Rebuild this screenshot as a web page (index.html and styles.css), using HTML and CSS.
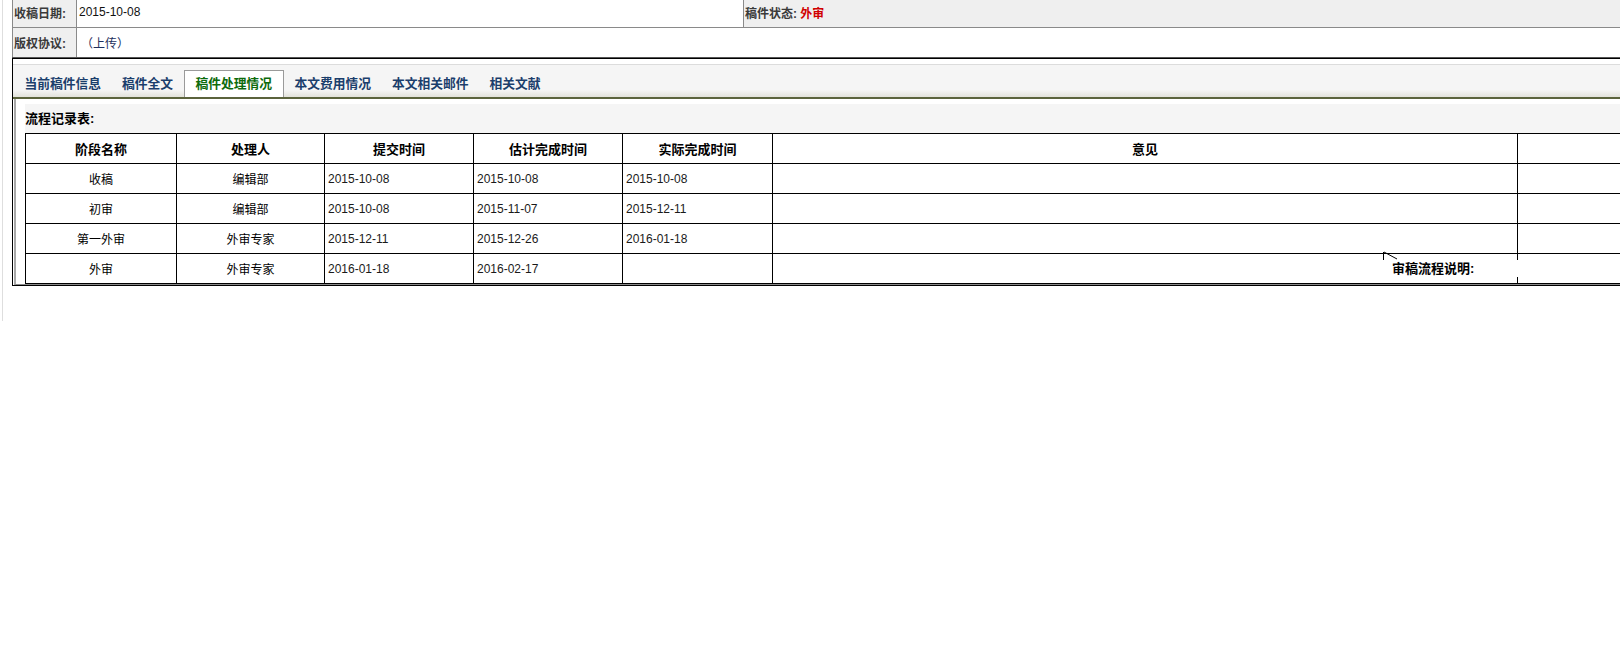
FILE: index.html
```html
<!DOCTYPE html>
<html lang="zh">
<head>
<meta charset="utf-8">
<title>稿件处理情况</title>
<link rel="stylesheet" href="styles.css">
</head>
<body>
<div class="frame">
  <table class="info">
    <colgroup><col class="c-label"><col class="c-value"><col class="c-status"></colgroup>
    <tr class="r1">
      <td class="label">收稿日期:</td>
      <td class="value">2015-10-08</td>
      <td class="status">稿件状态: <span class="red">外审</span></td>
    </tr>
    <tr class="r2">
      <td class="label">版权协议:</td>
      <td class="value link" colspan="2">（上传）</td>
    </tr>
  </table>

  <div class="panel">
    <div class="tabbar">
      <ul class="tabs">
        <li class="tab">当前稿件信息</li>
        <li class="tab">稿件全文</li>
        <li class="tab active">稿件处理情况</li>
        <li class="tab">本文费用情况</li>
        <li class="tab">本文相关邮件</li>
        <li class="tab">相关文献</li>
      </ul>
    </div>
    <div class="tabcontent">
      <div class="record">
        <div class="heading">流程记录表:</div>
        <table class="flow">
          <colgroup>
            <col class="w1"><col class="w2"><col class="w3"><col class="w4"><col class="w5"><col class="w6"><col class="w7">
          </colgroup>
          <tr class="head">
            <th>阶段名称</th><th>处理人</th><th>提交时间</th><th>估计完成时间</th><th>实际完成时间</th><th>意见</th><th></th>
          </tr>
          <tr>
            <td class="c">收稿</td><td class="c">编辑部</td><td>2015-10-08</td><td>2015-10-08</td><td>2015-10-08</td><td></td><td></td>
          </tr>
          <tr>
            <td class="c">初审</td><td class="c">编辑部</td><td>2015-10-08</td><td>2015-11-07</td><td>2015-12-11</td><td></td><td></td>
          </tr>
          <tr>
            <td class="c">第一外审</td><td class="c">外审专家</td><td>2015-12-11</td><td>2015-12-26</td><td>2016-01-18</td><td></td><td></td>
          </tr>
          <tr>
            <td class="c">外审</td><td class="c">外审专家</td><td>2016-01-18</td><td>2016-02-17</td><td></td><td></td><td></td>
          </tr>
        </table>
        <svg class="callout" width="20" height="12" viewBox="0 0 20 12"><path d="M2.5 2 V10 M3 2 L16 9" stroke="#000" stroke-width="1" fill="none"/></svg>
        <div class="tip">审稿流程说明:</div>
      </div>
    </div>
  </div>
</div>
</body>
</html>
```

FILE: styles.css
```css
html, body {
  margin: 0;
  padding: 0;
  background: #fff;
  overflow: hidden;
}
body {
  font-family: "Liberation Sans", "Noto Sans CJK SC", sans-serif;
  font-size: 12px;
  color: #000;
}
.frame {
  width: 1720px;
  margin-left: 2px;
  border-left: 1px solid #dedede;
  padding-left: 9px;
  padding-bottom: 35px;
}

/* top info table */
.info {
  border-collapse: collapse;
  width: 1700px;
  table-layout: fixed;
  margin-top: -4px;
}
.c-label { width: 64px; }
.c-value { width: 667px; }
.info td {
  border: 1px solid #8a8a8a;
  padding: 0 2px;
  white-space: nowrap;
  vertical-align: middle;
}
.info .r1 td { height: 30px; }
.info .r2 td { height: 29px; border-bottom-color: #555; }
.info .label {
  background: #efefef;
  font-weight: bold;
  color: #3a3a3a;
  padding-left: 1px;
}
.info .value { color: #111; }
.info .value.link { color: #1e2f5c; padding-left: 4px; }
.info .status {
  background: #efefef;
  font-weight: bold;
  color: #3a3a3a;
  padding-left: 1px;
}
.red { color: #d00000; }

/* panel */
.panel {
  border-left: 1px solid #000;
  border-top: 1px solid #000;
  border-bottom: 1px solid #000;
}
.tabbar {
  padding-top: 5px;
  background: #fff;
}
.tabs {
  list-style: none;
  margin: 0;
  padding: 5px 0 0 1px;
  display: flex;
  border-top: 1px solid #dcdcdc;
  border-bottom: 2px solid #5b633c;
  background: linear-gradient(to bottom, #f5f5f5 0%, #f5f5f5 78%, #e2e2da 100%);
}
.tab {
  padding: 0 9.5px;
  height: 27px;
  line-height: 25px;
  font-size: 12.75px;
  font-weight: bold;
  color: #1b3e6c;
  border: 1px solid transparent;
  border-bottom: 0;
  box-sizing: border-box;
}
.tab.active {
  background: #fff;
  border-color: #9a9a9a;
  color: #0c6b0c;
  padding: 0 11px;
}
.tabcontent {
  margin-left: 1px;
  border-left: 2px solid #a8a8a8;
  border-bottom: 1px solid #8a8a8a;
  padding: 5px 0 0 9px;
  background: #fff;
}
.record {
  background: #f5f5f5;
  position: relative;
  padding-top: 5px;
}
.heading {
  font-weight: bold;
  font-size: 13px;
  line-height: 20px;
  margin-bottom: 4px;
  color: #000;
}
.flow {
  border-collapse: collapse;
  table-layout: fixed;
  width: 1643px;
  background: #fff;
}
.w1 { width: 151px; }
.w2 { width: 148px; }
.w3 { width: 149px; }
.w4 { width: 149px; }
.w5 { width: 150px; }
.w6 { width: 745px; }
.w7 { width: 151px; }
.flow th, .flow td {
  border: 1px solid #000;
  height: 30px;
  padding: 0 3px;
  box-sizing: border-box;
  white-space: nowrap;
  vertical-align: middle;
  text-align: left;
  color: #1a1a1a;
}
.flow th {
  text-align: center;
  font-weight: bold;
  font-size: 13px;
  color: #000;
}
.flow td.c { text-align: center; color: #000; }
.callout {
  position: absolute;
  left: 1356px;
  bottom: 22px;
}
.tip {
  position: absolute;
  left: 1360px;
  bottom: 7px;
  width: 146px;
  height: 17px;
  line-height: 17px;
  padding-left: 7px;
  background: #fff;
  font-weight: bold;
  font-size: 13px;
  color: #000;
}
```
